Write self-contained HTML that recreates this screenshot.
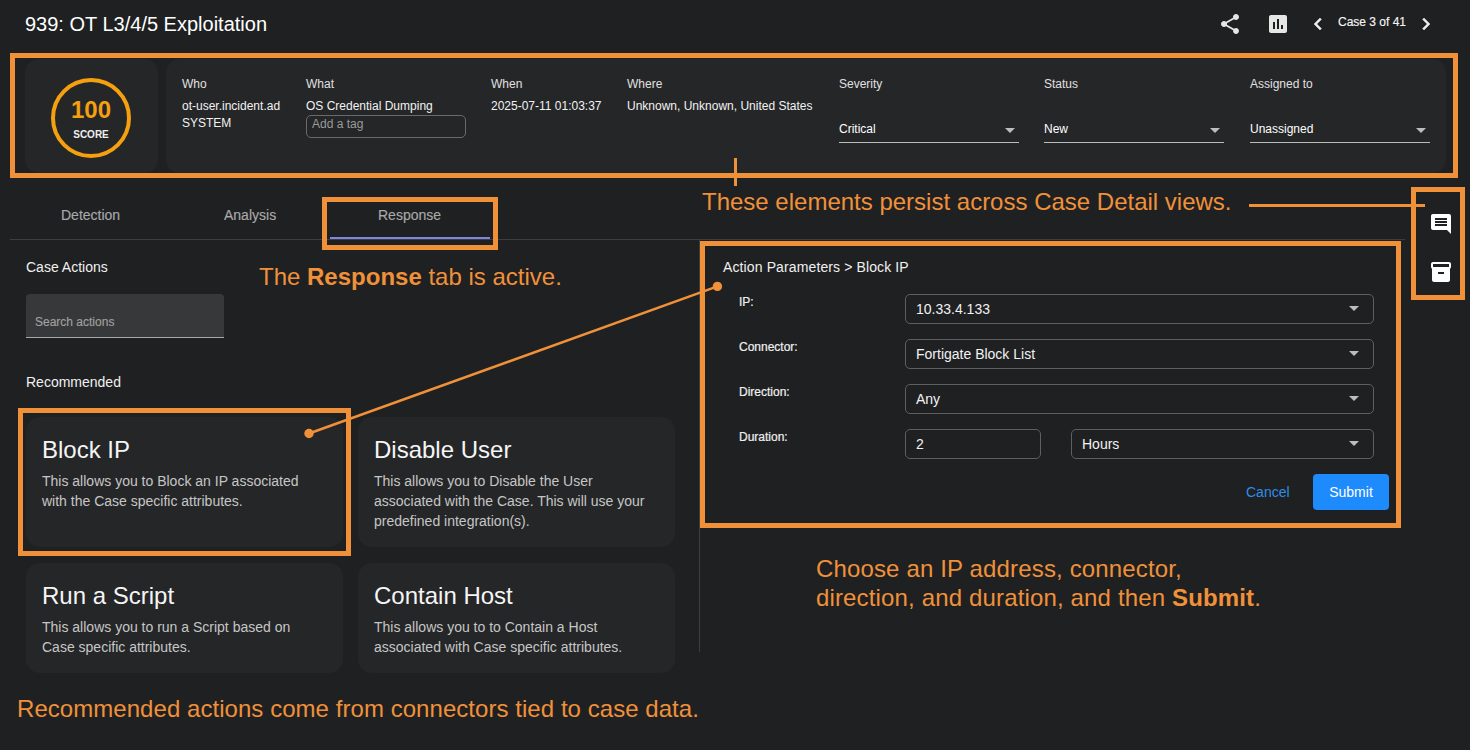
<!DOCTYPE html>
<html><head><meta charset="utf-8">
<style>
*{box-sizing:border-box;margin:0;padding:0}
html,body{width:1470px;height:750px;overflow:hidden;background:#1f2022;font-family:"Liberation Sans",sans-serif;color:#e8e8e8}
.a{position:absolute}
.ob{position:absolute;border:5px solid #f0913a}
.ann{position:absolute;color:#f0913a;font-size:24px;white-space:nowrap}
.card{position:absolute;background:#252628;border-radius:14px}
.lbl{position:absolute;font-size:12px;color:#e0e0e0;white-space:nowrap}
.val{position:absolute;font-size:12px;color:#f2f2f2;white-space:nowrap}
.sel{position:absolute;border-bottom:1px solid #bdbdbd;height:21px}
.sel span{position:absolute;left:0;top:0;font-size:12px;color:#fff}
.arrow{position:absolute;width:0;height:0;border-left:5px solid transparent;border-right:5px solid transparent;border-top:5px solid #bdbdbd}
.tab{position:absolute;font-size:14px;color:#a9a9a9;margin-top:-1px;-webkit-text-stroke:0.15px #a9a9a9;white-space:nowrap}
.ac{position:absolute;background:#252628;border-radius:14px}
.ac h3{position:absolute;left:16px;font-weight:normal;font-size:24px;color:#f5f5f5;white-space:nowrap}
.ac p{position:absolute;left:16px;font-size:14px;line-height:20px;color:#c6c6c6}
.flabel{position:absolute;font-size:12px;color:#f0f0f0;-webkit-text-stroke:0.2px #f0f0f0}
.fsel{position:absolute;border:1px solid #5f5f5f;border-radius:5px;height:30px}
.fsel span{position:absolute;left:10px;top:6px;font-size:14px;color:#f2f2f2;white-space:nowrap}
.fsel .arrow{right:14px;top:11px}
</style></head><body>

<div class="a" style="left:25px;top:13px;font-size:20px;color:#fff;white-space:nowrap">939: OT L3/4/5 Exploitation</div>

<!-- top right icons -->
<svg class="a" style="left:1218px;top:12px" width="24" height="24" viewBox="0 0 24 24"><path fill="#e6e6e6" d="M18 16.08c-.76 0-1.44.3-1.96.77L8.91 12.7c.05-.23.09-.46.09-.7s-.04-.47-.09-.7l7.05-4.11c.54.5 1.25.81 2.04.81 1.66 0 3-1.34 3-3s-1.34-3-3-3-3 1.34-3 3c0 .24.04.47.09.7L8.04 9.81C7.5 9.31 6.79 9 6 9c-1.66 0-3 1.34-3 3s1.34 3 3 3c.79 0 1.5-.31 2.04-.81l7.12 4.16c-.05.21-.08.43-.08.65 0 1.61 1.31 2.92 2.92 2.92 1.61 0 2.92-1.31 2.92-2.92s-1.31-2.92-2.92-2.92z"/></svg>
<svg class="a" style="left:1266px;top:12px" width="24" height="24" viewBox="0 0 24 24"><path fill="#e6e6e6" d="M19 3H5c-1.1 0-2 .9-2 2v14c0 1.1.9 2 2 2h14c1.1 0 2-.9 2-2V5c0-1.1-.9-2-2-2zM9 17H7v-7h2v7zm4 0h-2V7h2v10zm4 0h-2v-4h2v4z"/></svg>
<svg class="a" style="left:1306px;top:12px" width="24" height="24" viewBox="0 0 24 24"><path fill="#ececec" stroke="#ececec" stroke-width="0.5" stroke-linejoin="miter" d="M15.41 7.41L14 6l-6 6 6 6 1.41-1.41L10.83 12z"/></svg>
<div class="a" style="left:1338px;top:15px;font-size:12px;color:#f5f5f5;white-space:nowrap;-webkit-text-stroke:0.15px #f5f5f5">Case 3 of 41</div>
<svg class="a" style="left:1414px;top:12px" width="24" height="24" viewBox="0 0 24 24"><path fill="#ececec" stroke="#ececec" stroke-width="0.5" stroke-linejoin="miter" d="M10 6L8.59 7.41 13.17 12l-4.58 4.59L10 18l6-6z"/></svg>

<!-- header cards -->
<div class="card" style="left:25px;top:59px;width:133px;height:114px"></div>
<div class="a" style="left:51px;top:78px;width:80px;height:80px;border:4px solid #f5a00f;border-radius:50%"></div>
<div class="a" style="left:51px;top:96px;width:80px;text-align:center;font-size:24px;font-weight:bold;color:#f5a00f">100</div>
<div class="a" style="left:51px;top:129px;width:80px;text-align:center;font-size:10px;font-weight:bold;color:#f0f0f0">SCORE</div>

<div class="card" style="left:166px;top:59px;width:1280px;height:114px"></div>
<div class="lbl" style="left:182px;top:77px">Who</div>
<div class="val" style="left:182px;top:98px;line-height:17px">ot-user.incident.ad<br>SYSTEM</div>
<div class="lbl" style="left:306px;top:77px">What</div>
<div class="val" style="left:306px;top:99px">OS Credential Dumping</div>
<div class="a" style="left:306px;top:115px;width:160px;height:23px;border:1px solid #6a6a6a;border-radius:5px"><span style="position:absolute;left:5px;top:1px;font-size:12px;color:#9a9a9a">Add a tag</span></div>
<div class="lbl" style="left:491px;top:77px">When</div>
<div class="val" style="left:491px;top:99px">2025-07-11 01:03:37</div>
<div class="lbl" style="left:627px;top:77px">Where</div>
<div class="val" style="left:627px;top:99px">Unknown, Unknown, United States</div>
<div class="lbl" style="left:839px;top:77px">Severity</div>
<div class="sel" style="left:839px;top:122px;width:180px"><span>Critical</span><i class="arrow" style="right:4px;top:6px"></i></div>
<div class="lbl" style="left:1044px;top:77px">Status</div>
<div class="sel" style="left:1044px;top:122px;width:180px"><span>New</span><i class="arrow" style="right:4px;top:6px"></i></div>
<div class="lbl" style="left:1250px;top:77px">Assigned to</div>
<div class="sel" style="left:1250px;top:122px;width:180px"><span>Unassigned</span><i class="arrow" style="right:4px;top:6px"></i></div>

<div class="ob" style="left:10px;top:53px;width:1448px;height:125px"></div>

<!-- tabs -->
<div class="a" style="left:10px;top:239px;width:1395px;height:1px;background:#3c3d3f"></div>
<div class="tab" style="left:61px;top:208px">Detection</div>
<div class="tab" style="left:224px;top:208px">Analysis</div>
<div class="tab" style="left:378px;top:208px">Response</div>
<div class="a" style="left:330px;top:237px;width:160px;height:2px;background:#7f86e0"></div>
<div class="ob" style="left:322px;top:197px;width:176px;height:53px"></div>

<!-- vertical divider -->
<div class="a" style="left:699px;top:240px;width:1px;height:412px;background:#3c3d3f"></div>

<!-- left panel -->
<div class="a" style="left:26px;top:259px;font-size:14px;color:#f0f0f0">Case Actions</div>
<div class="a" style="left:26px;top:294px;width:198px;height:44px;background:#37383a;border-radius:4px 4px 0 0;border-bottom:1px solid #a8a8a8"><span style="position:absolute;left:9px;top:21px;font-size:12px;color:#a0a0a0;-webkit-text-stroke:0.15px #a0a0a0">Search actions</span></div>
<div class="a" style="left:26px;top:374px;font-size:14px;color:#f0f0f0">Recommended</div>

<div class="ac" style="left:26px;top:417px;width:317px;height:130px"><h3 style="top:19px">Block IP</h3><p style="top:54px">This allows you to Block an IP associated<br>with the Case specific attributes.</p></div>
<div class="ac" style="left:358px;top:417px;width:317px;height:130px"><h3 style="top:19px">Disable User</h3><p style="top:54px">This allows you to Disable the User<br>associated with the Case. This will use your<br>predefined integration(s).</p></div>
<div class="ac" style="left:26px;top:563px;width:317px;height:110px"><h3 style="top:19px">Run a Script</h3><p style="top:54px">This allows you to run a Script based on<br>Case specific attributes.</p></div>
<div class="ac" style="left:358px;top:563px;width:317px;height:110px"><h3 style="top:19px">Contain Host</h3><p style="top:54px">This allows you to to Contain a Host<br>associated with Case specific attributes.</p></div>
<div class="ob" style="left:18px;top:408px;width:333px;height:148px"></div>

<!-- right panel -->
<div class="a" style="left:723px;top:259px;font-size:14px;color:#f0f0f0;white-space:nowrap;letter-spacing:0.12px">Action Parameters &gt; Block IP</div>
<div class="flabel" style="left:739px;top:295px">IP:</div>
<div class="flabel" style="left:739px;top:340px">Connector:</div>
<div class="flabel" style="left:739px;top:385px">Direction:</div>
<div class="flabel" style="left:739px;top:430px">Duration:</div>
<div class="fsel" style="left:905px;top:294px;width:469px"><span>10.33.4.133</span><i class="arrow"></i></div>
<div class="fsel" style="left:905px;top:339px;width:469px"><span>Fortigate Block List</span><i class="arrow"></i></div>
<div class="fsel" style="left:905px;top:384px;width:469px"><span>Any</span><i class="arrow"></i></div>
<div class="fsel" style="left:905px;top:429px;width:136px"><span>2</span></div>
<div class="fsel" style="left:1071px;top:429px;width:303px"><span>Hours</span><i class="arrow"></i></div>
<div class="a" style="left:1246px;top:484px;font-size:14px;color:#2d8ee8">Cancel</div>
<div class="a" style="left:1313px;top:474px;width:76px;height:36px;background:#1e8bfd;border-radius:4px;color:#fff;font-size:14px;text-align:center;line-height:36px">Submit</div>
<div class="ob" style="left:700px;top:241px;width:701px;height:287px"></div>

<!-- right side icons -->
<div class="ob" style="left:1411px;top:187px;width:54px;height:113px"></div>
<svg class="a" style="left:1429px;top:212px" width="24" height="24" viewBox="0 0 24 24"><path fill="#fff" d="M21.99 4c0-1.1-.89-2-1.99-2H4c-1.1 0-2 .9-2 2v12c0 1.1.9 2 2 2h14l4 4-.01-18zM18 14H6v-2h12v2zm0-3H6V9h12v2zm0-3H6V6h12v2z"/></svg>
<svg class="a" style="left:1429px;top:260px" width="24" height="24" viewBox="0 0 24 24"><path fill="#fff" d="M20 2H4c-1 0-2 .9-2 2v3.01c0 .72.43 1.34 1 1.69V20c0 1.1 1.1 2 2 2h14c.9 0 2-.9 2-2V8.7c.57-.35 1-.97 1-1.69V4c0-1.1-1-2-2-2zm-5 12H9v-2h6v2zm5-7H4V4l16-.02V7z"/></svg>

<!-- annotations -->
<div class="a" style="left:734px;top:158px;width:3px;height:28px;background:#f0913a"></div>
<div class="ann" style="left:702px;top:188px">These elements persist across Case Detail views.</div>
<div class="a" style="left:1249px;top:204px;width:176px;height:3px;background:#f0913a"></div>
<div class="ann" style="left:259px;top:263px">The <b>Response</b> tab is active.</div>
<svg class="a" style="left:0;top:0" width="1470" height="750"><line x1="309" y1="433.5" x2="717.4" y2="286.4" stroke="#f0913a" stroke-width="2.5"/><circle cx="309" cy="433.5" r="4.7" fill="#f0913a"/><circle cx="717.4" cy="286.4" r="4.7" fill="#f0913a"/></svg>
<div class="ann" style="left:816px;top:554px;line-height:29px;letter-spacing:0.15px">Choose an IP address, connector,<br>direction, and duration, and then <b>Submit</b>.</div>
<div class="ann" style="left:17px;top:695px;letter-spacing:0.05px">Recommended actions come from connectors tied to case data.</div>

</body></html>
